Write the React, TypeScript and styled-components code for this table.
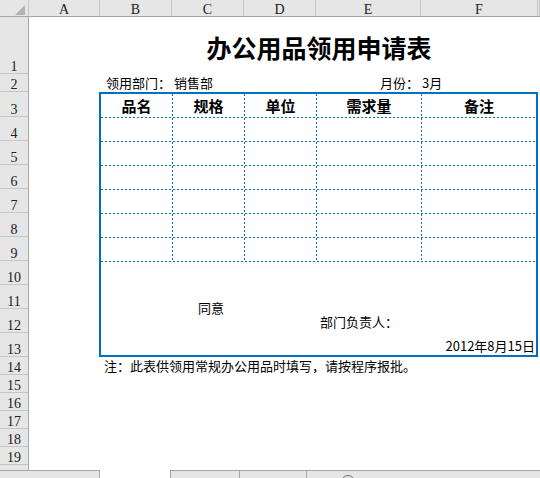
import React from "react";
import styled, { createGlobalStyle } from "styled-components";

const HEADER_BG = "#e6e6e6";
const HEADER_LINE = "#a6a6a6";
const HEADER_SEP = "#c6c6c6";
const BLUE = "#0070c0";
const CJK = `"Noto Sans CJK SC", "Noto Sans", sans-serif`;
const LATIN_HEAD = `"Liberation Serif", "DejaVu Serif", serif`;

const GlobalStyle = createGlobalStyle`
  html, body { margin: 0; padding: 0; background: #fff; overflow: hidden; }
  body { font-family: ${CJK}; color: #000; }
`;

const Window = styled.div`
  width: 540px;
  height: 478px;
  display: flex;
  flex-direction: column;
  overflow: hidden;
`;

/* ---------- column header bar ---------- */
const ColumnBar = styled.div`
  display: flex;
  flex-shrink: 0;
  height: 17px;
  box-sizing: border-box;
  background: ${HEADER_BG};
  border-bottom: 1px solid ${HEADER_LINE};
`;

const Corner = styled.div`
  width: 29px;
  flex-shrink: 0;
  box-sizing: border-box;
  border-right: 1px solid ${HEADER_SEP};
  display: flex;
  align-items: flex-end;
  justify-content: flex-end;
  padding: 0 3px 1px 0;
`;

const ColHeader = styled.div<{ $w?: number }>`
  ${(p) => (p.$w ? `width: ${p.$w}px; flex-shrink: 0;` : `flex: 1;`)}
  box-sizing: border-box;
  border-right: 1px solid ${HEADER_SEP};
  font-family: ${LATIN_HEAD};
  font-size: 14px;
  line-height: 12px;
  padding-top: 4px;
  text-align: center;
  color: #222;
`;

/* ---------- body ---------- */
const Body = styled.div`
  display: flex;
  flex-shrink: 0;
  height: 453px;
`;

const RowHeaderColumn = styled.div`
  width: 29px;
  flex-shrink: 0;
  box-sizing: border-box;
  background: ${HEADER_BG};
  border-right: 1px solid ${HEADER_LINE};
  display: flex;
  flex-direction: column;
`;

const RowNum = styled.div<{ $h: number }>`
  height: ${(p) => p.$h}px;
  flex-shrink: 0;
  box-sizing: border-box;
  border-bottom: 1px solid ${HEADER_SEP};
  display: flex;
  align-items: flex-end;
  justify-content: center;
  font-family: ${LATIN_HEAD};
  font-size: 14px;
  line-height: 12px;
  color: #222;
`;

const Canvas = styled.div`
  flex: 1;
  display: flex;
  flex-direction: column;
  background: #fff;
`;

const TitleRow = styled.div`
  height: 57px;
  flex-shrink: 0;
  margin-left: 71px;
  width: 438px;
  display: flex;
  align-items: center;
  justify-content: center;
  padding-top: 3px;
  box-sizing: border-box;
  font-size: 25px;
  font-weight: 700;
  white-space: nowrap;
`;

const InfoRow = styled.div`
  height: 18px;
  flex-shrink: 0;
  display: flex;
  font-size: 13px;
  line-height: 18px;
  white-space: nowrap;
`;

const Field = styled.div<{ $w: number; $indent: number }>`
  width: ${(p) => p.$w}px;
  flex-shrink: 0;
  box-sizing: border-box;
  padding-left: ${(p) => p.$indent}px;
`;

const FormBox = styled.div`
  margin-left: 70px;
  width: 439px;
  height: 265px;
  flex-shrink: 0;
  box-sizing: border-box;
  border: 2px solid ${BLUE};
  display: flex;
  flex-direction: column;
`;

const GridRow = styled.div`
  display: flex;
  height: 24px;
  flex-shrink: 0;
  background: repeating-linear-gradient(to right, ${BLUE} 0 2px, transparent 2px 4px) left bottom / 100% 1px no-repeat;
`;

const Cell = styled.div<{ $w: number; $divider: boolean; $head?: boolean }>`
  width: ${(p) => p.$w}px;
  flex-shrink: 0;
  box-sizing: border-box;
  height: 24px;
  ${(p) =>
    p.$divider
      ? `background: repeating-linear-gradient(to bottom, ${BLUE} 0 2px, transparent 2px 4px) right top / 1px 100% no-repeat;`
      : ""}
  padding-right: ${(p) => (p.$divider ? 1 : 0)}px;
  text-align: center;
  font-size: 15px;
  font-weight: ${(p) => (p.$head ? 700 : 400)};
  line-height: 23px;
`;

const MergedCell = styled.div`
  flex: 1;
  display: flex;
  flex-direction: column;
  padding-top: 39px;
  font-size: 13px;
  line-height: 14px;
  white-space: nowrap;
`;

const MergedLine = styled.div<{ $indent?: number; $gap?: number; $right?: boolean }>`
  padding-left: ${(p) => p.$indent ?? 0}px;
  margin-top: ${(p) => p.$gap ?? 0}px;
  text-align: ${(p) => (p.$right ? "right" : "left")};
  padding-right: ${(p) => (p.$right ? 1 : 0)}px;
`;

const NoteRow = styled.div`
  height: 18px;
  flex-shrink: 0;
  padding-left: 75px;
  font-size: 13px;
  line-height: 18px;
  white-space: nowrap;
`;

/* ---------- sheet tab bar ---------- */
const SheetBar = styled.div`
  display: flex;
  flex-shrink: 0;
  height: 30px;
`;

const NavArea = styled.div`
  width: 100px;
  flex-shrink: 0;
  box-sizing: border-box;
  background: ${HEADER_BG};
  border-top: 1px solid ${HEADER_LINE};
  border-right: 1px solid ${HEADER_LINE};
`;

const ActiveTab = styled.div`
  width: 70px;
  flex-shrink: 0;
  background: #fff;
`;

const TabStrip = styled.div`
  flex: 1;
  display: flex;
  box-sizing: border-box;
  background: ${HEADER_BG};
  border-top: 1px solid ${HEADER_LINE};
  border-left: 1px solid ${HEADER_LINE};
`;

const Tab = styled.div<{ $w: number }>`
  width: ${(p) => p.$w}px;
  flex-shrink: 0;
  box-sizing: border-box;
  border-right: 1px solid ${HEADER_LINE};
`;

const AddSheet = styled.div`
  margin: 4px 0 0 34px;
  width: 14px;
  height: 14px;
  box-sizing: border-box;
  border: 1.5px solid #6d6d6d;
  border-radius: 50%;
`;

const COLS = [
  { key: "A", w: 71 },
  { key: "B", w: 72 },
  { key: "C", w: 72 },
  { key: "D", w: 72 },
  { key: "E", w: 105 },
  { key: "F", w: 117 },
];

const ROW_HEIGHTS = [57, 18, 25, 24, 24, 24, 24, 24, 24, 24, 24, 24, 24, 18, 18, 18, 18, 18, 18];

const TABLE_COLS = [
  { title: "品名", w: 72 },
  { title: "规格", w: 72 },
  { title: "单位", w: 72 },
  { title: "需求量", w: 105 },
  { title: "备注", w: 114 },
];

const DATA_ROWS = 6;

export default function App() {
  return (
    <Window>
      <GlobalStyle />
      <ColumnBar>
        <Corner>
          <svg width="10" height="10" viewBox="0 0 10 10">
            <polygon points="10,0 10,10 0,10" fill="#b4b4b4" />
          </svg>
        </Corner>
        {COLS.map((c) => (
          <ColHeader key={c.key} $w={c.w}>
            {c.key}
          </ColHeader>
        ))}
        <ColHeader />
      </ColumnBar>

      <Body>
        <RowHeaderColumn>
          {ROW_HEIGHTS.map((h, i) => (
            <RowNum key={i} $h={h}>
              {i + 1}
            </RowNum>
          ))}
        </RowHeaderColumn>

        <Canvas>
          <TitleRow>办公用品领用申请表</TitleRow>

          <InfoRow>
            <Field $w={71} $indent={0} />
            <Field $w={216} $indent={6}>
              领用部门： 销售部
            </Field>
            <Field $w={105} $indent={64}>
              月份： 3月
            </Field>
          </InfoRow>

          <FormBox>
            <GridRow>
              {TABLE_COLS.map((c, i) => (
                <Cell key={c.title} $w={c.w} $divider={i < TABLE_COLS.length - 1} $head>
                  {c.title}
                </Cell>
              ))}
            </GridRow>
            {Array.from({ length: DATA_ROWS }).map((_, r) => (
              <GridRow key={r}>
                {TABLE_COLS.map((c, i) => (
                  <Cell key={c.title} $w={c.w} $divider={i < TABLE_COLS.length - 1} />
                ))}
              </GridRow>
            ))}
            <MergedCell>
              <MergedLine $indent={97}>同意</MergedLine>
              <MergedLine $indent={219}>部门负责人：</MergedLine>
              <MergedLine $gap={10} $right>
                2012年8月15日
              </MergedLine>
            </MergedCell>
          </FormBox>

          <NoteRow>注：此表供领用常规办公用品时填写，请按程序报批。</NoteRow>
        </Canvas>
      </Body>

      <SheetBar>
        <NavArea />
        <ActiveTab />
        <TabStrip>
          <Tab $w={69} />
          <Tab $w={67} />
          <AddSheet />
        </TabStrip>
      </SheetBar>
    </Window>
  );
}
